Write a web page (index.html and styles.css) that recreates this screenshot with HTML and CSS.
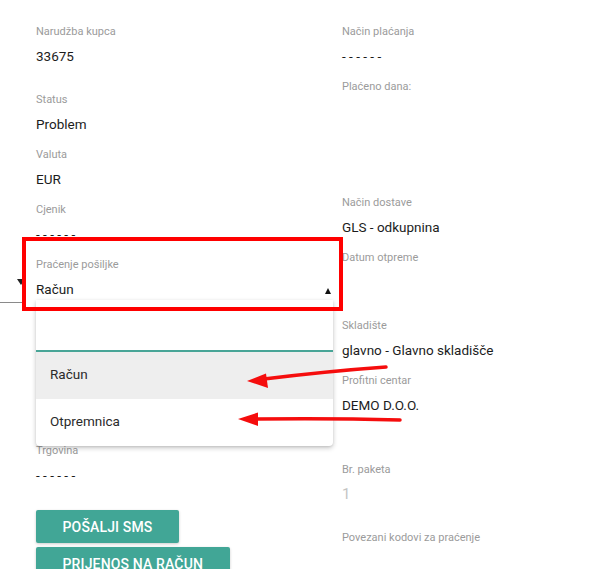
FILE: index.html
```html
<!DOCTYPE html>
<html lang="hr">
<head>
<meta charset="utf-8">
<title>Narudžba</title>
<link rel="stylesheet" href="styles.css">
</head>
<body>
<div class="page">
  <div class="col">
    <div class="field">
      <div class="label">Narudžba kupca</div>
      <div class="value">33675</div>
    </div>
    <div class="field gap-m">
      <div class="label">Status</div>
      <div class="value">Problem</div>
    </div>
    <div class="field gap-s">
      <div class="label">Valuta</div>
      <div class="value">EUR</div>
    </div>
    <div class="field gap-s">
      <div class="label">Cjenik</div>
      <div class="value">- - - - - -</div>
    </div>
    <div class="field gap-s select-field">
      <div class="ghost-line"></div>
      <div class="ghost-caret"></div>
      <div class="label">Praćenje pošiljke</div>
      <div class="value">Račun</div>
      <div class="caret-up"></div>
      <div class="menu">
        <div class="menu-search"></div>
        <div class="menu-item active">Račun</div>
        <div class="menu-item">Otpremnica</div>
      </div>
      <div class="annot-box"></div>
    </div>
    <div class="field gap-trg">
      <div class="label">Trgovina</div>
      <div class="value">- - - - - -</div>
    </div>
    <div class="buttons">
      <button class="btn">Pošalji SMS</button>
      <button class="btn">Prijenos na račun</button>
    </div>
  </div>
  <div class="col">
    <div class="field">
      <div class="label">Način plaćanja</div>
      <div class="value">- - - - - -</div>
    </div>
    <div class="field gap-s">
      <div class="label">Plaćeno dana:</div>
      <div class="value"></div>
    </div>
    <div class="field gap-xl">
      <div class="label">Način dostave</div>
      <div class="value">GLS - odkupnina</div>
    </div>
    <div class="field gap-s">
      <div class="label">Datum otpreme</div>
      <div class="value"></div>
    </div>
    <div class="field gap-m">
      <div class="label">Skladište</div>
      <div class="value">glavno - Glavno skladišče</div>
    </div>
    <div class="field gap-s">
      <div class="label">Profitni centar</div>
      <div class="value">DEMO D.O.O.</div>
    </div>
    <div class="field gap-l">
      <div class="label">Br. paketa</div>
      <div class="value disabled">1</div>
    </div>
    <div class="field gap-m">
      <div class="label">Povezani kodovi za praćenje</div>
    </div>
  </div>
  <svg class="arrows" width="610" height="569" viewBox="0 0 610 569" aria-hidden="true">
    <path d="M386 367 Q330 371 264 379" fill="none" stroke="#f50d0d" stroke-width="3.5" stroke-linecap="round"/>
    <polygon points="247,381 266,373.5 268,388" fill="#f50d0d"/>
    <path d="M400 420 Q330 418 256 419" fill="none" stroke="#f50d0d" stroke-width="3.5" stroke-linecap="round"/>
    <polygon points="238,419 258,412.5 258,426" fill="#f50d0d"/>
  </svg>
</div>
</body>
</html>
```
FILE: styles.css
```css
* { box-sizing: border-box; }
html, body { margin: 0; padding: 0; background: #fff; }
body {
  font-family: Roboto, "Liberation Sans", Arial, sans-serif;
  color: #212121;
  width: 610px;
  height: 569px;
  overflow: hidden;
}
.page {
  position: relative;
  display: grid;
  grid-template-columns: 306px 1fr;
  padding: 23px 0 0 36px;
  height: 569px;
}
.col {
  display: flex;
  flex-direction: column;
  align-items: stretch;
}
.field { position: relative; }
.label {
  font-size: 11px;
  line-height: 18px;
  height: 16px;
  color: #9b9b9b;
}
.value {
  margin-top: 7px;
  font-size: 13.5px;
  line-height: 20px;
  height: 20px;
  color: #1c1c1c;
}
.value.disabled { color: #c4c4c4; font-size: 15px; }
.gap-s { margin-top: 12px; }
.gap-m { margin-top: 25px; }
.gap-l { margin-top: 46px; }
.gap-xl { margin-top: 73px; }
.gap-trg { margin-top: 143px; }

.select-field { z-index: 2; }
.ghost-line {
  position: absolute;
  left: -36px;
  top: 46px;
  width: 26px;
  height: 1px;
  background: #8a8a8a;
}
.ghost-caret {
  position: absolute;
  left: -19px;
  top: 23px;
  width: 0;
  height: 0;
  border-left: 4px solid transparent;
  border-right: 4px solid transparent;
  border-top: 6px solid #222;
}
.caret-up {
  position: absolute;
  right: 11px;
  top: 32px;
  width: 0;
  height: 0;
  border-left: 3.5px solid transparent;
  border-right: 3.5px solid transparent;
  border-bottom: 6px solid #111;
}
.menu {
  position: absolute;
  left: 0;
  top: 44px;
  width: 297px;
  background: #fff;
  border-radius: 0 0 4px 4px;
  box-shadow: 0 2px 5px rgba(0,0,0,0.22), 0 1px 2px rgba(0,0,0,0.08);
  z-index: 3;
}
.menu-search {
  height: 52px;
  border-bottom: 2px solid #48a597;
}
.menu-item {
  height: 47px;
  line-height: 45px;
  padding-left: 14px;
  font-size: 13.5px;
  color: #2a2a2a;
}
.menu-item.active { background: #eeeeee; }
.annot-box {
  position: absolute;
  left: -14px;
  top: -19px;
  width: 321px;
  height: 74px;
  border: 4px solid #ff0000;
  z-index: 4;
}
.buttons {
  margin-top: 25px;
  display: flex;
  flex-direction: column;
  align-items: flex-start;
  gap: 4px;
}
.btn {
  height: 33px;
  padding: 0 26.5px;
  border: 0;
  border-radius: 2px;
  background: #41a696;
  color: #fff;
  font-family: Roboto, "Liberation Sans", Arial, sans-serif;
  font-size: 14px;
  font-weight: 500;
  text-transform: uppercase;
  letter-spacing: 0.15px;
  box-shadow: 0 1px 3px rgba(0,0,0,0.2);
}
.arrows {
  position: absolute;
  left: 0;
  top: 0;
  pointer-events: none;
  z-index: 10;
}
```
